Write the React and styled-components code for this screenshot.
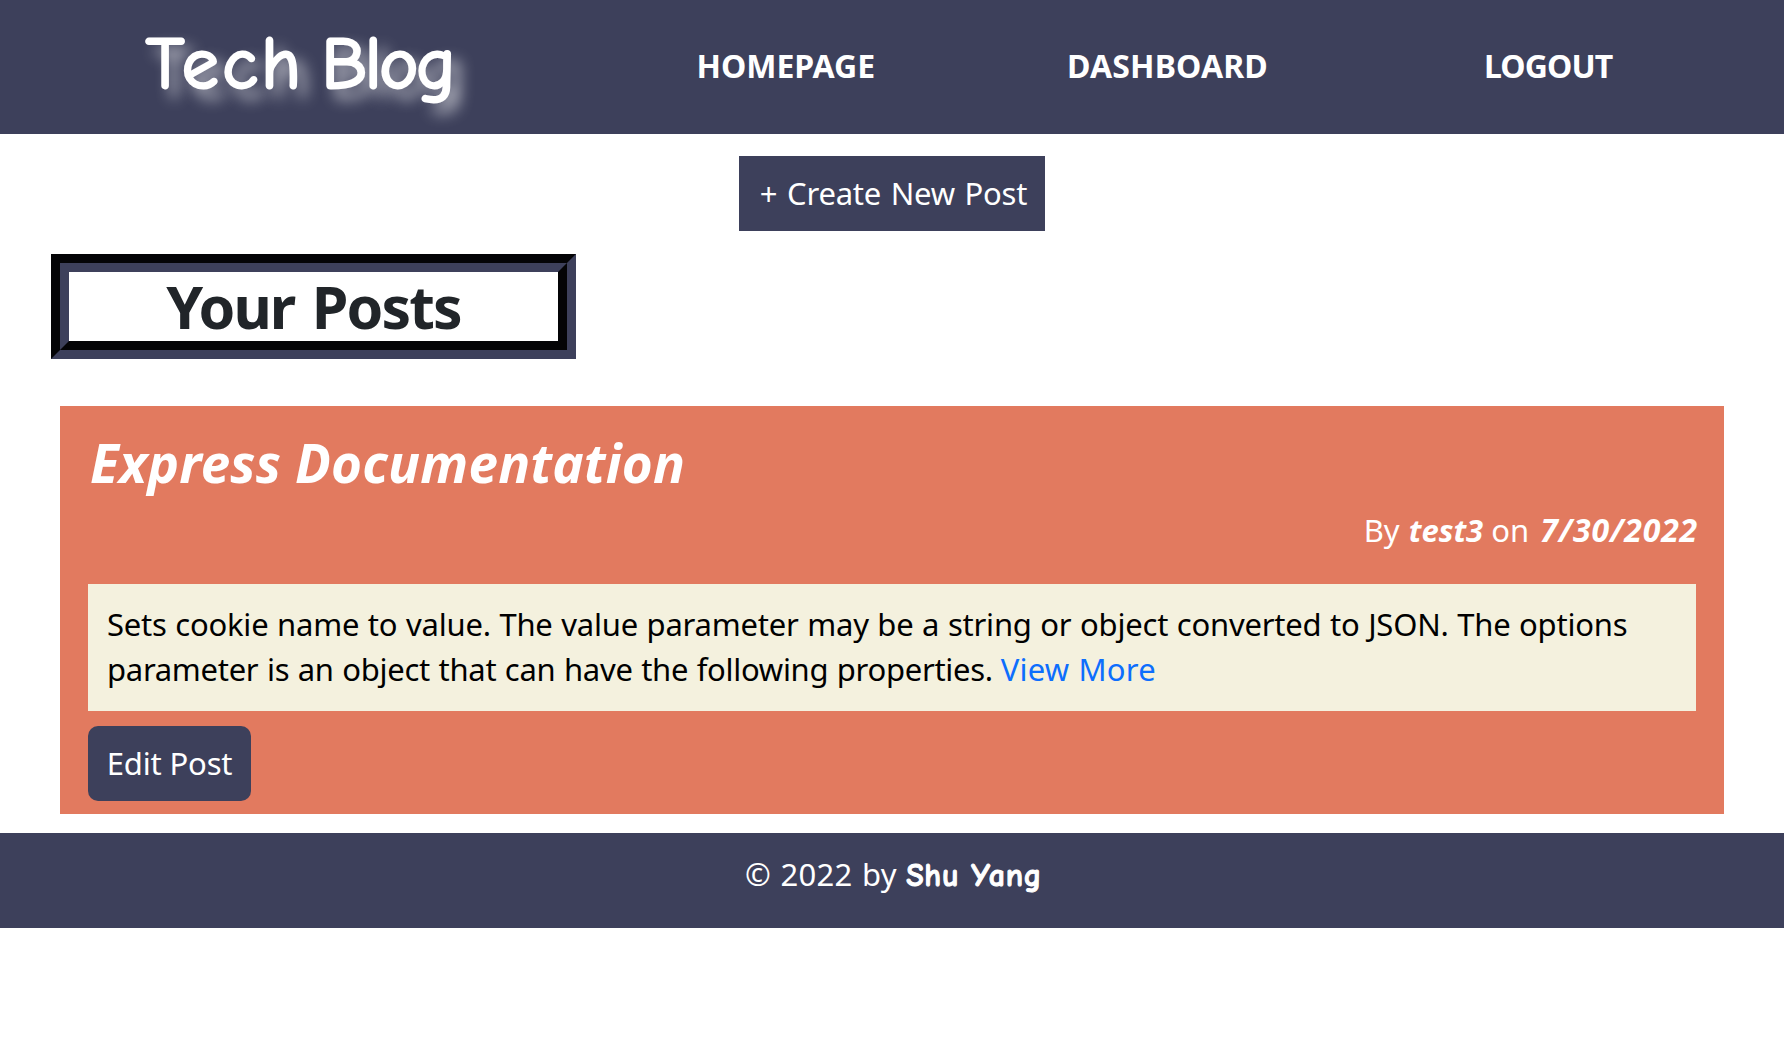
import React from "react";
import styled, { createGlobalStyle } from "styled-components";

const navy = "#3d405b";
const sans = `"Segoe UI", "Noto Sans", "Open Sans", sans-serif`;
const comic = `"Comic Sans MS", "Comic Neue", "Noto Sans", cursive`;

const GlobalStyle = createGlobalStyle`
  *, *::before, *::after { box-sizing: border-box; }
  body {
    margin: 0;
    background: #fff;
    color: #212529;
    font-family: ${sans};
    font-size: 31px;
    line-height: 45px;
  }
  h1, h2, h3, p { margin: 0; }
  a { color: inherit; text-decoration: none; }
`;

const Header = styled.header`
  display: grid;
  grid-template-columns: 595px repeat(3, 1fr);
  align-items: center;
  height: 134px;
  padding: 0 44px 3px 0;
  background: ${navy};
  color: #fff;
`;

const Brand = styled.h1`
  padding: 0 0 4px 146px;
  font: 400 73px/90px ${comic};
  word-spacing: -7px;
  white-space: nowrap;
  -webkit-text-stroke: 3px #fff;
  text-shadow: 9px 10px 15px #fff;
`;

const Tracked = styled.span`
  letter-spacing: ${(p) => p.$by}px;
`;

const NavLink = styled.a`
  justify-self: center;
  font-size: 32px;
  font-weight: 700;
  letter-spacing: ${(p) => p.$tracking || 0}px;
  margin-right: ${(p) => p.$shift || 0}px;
`;

const Actions = styled.div`
  display: flex;
  justify-content: center;
  padding: 22px 0 23px;
`;

const Button = styled.a`
  display: flex;
  align-items: center;
  justify-content: center;
  width: ${(p) => p.$width}px;
  height: 75px;
  padding-left: ${(p) => p.$indent || 0}px;
  border-radius: ${(p) => p.$radius || 0}px;
  background: ${navy};
  color: #fff;
  letter-spacing: ${(p) => p.$tracking || -0.15}px;
  word-spacing: ${(p) => p.$gap || 0}px;
  white-space: nowrap;
`;

const SectionTitle = styled.h2`
  width: 525px;
  height: 105px;
  margin-left: 51px;
  border: 18px groove ${navy};
  text-align: center;
  font-size: 59px;
  font-weight: 700;
  line-height: 69px;
  letter-spacing: -1.9px;
  word-spacing: 4px;
`;

const Card = styled.article`
  margin: 47px 60px 19px;
  height: 408px;
  padding: 25px 28px 0;
  background: #e27a5f;
  color: #fff;
`;

const CardTitle = styled.h3`
  padding-left: 2px;
  font-size: 53px;
  font-style: italic;
  font-weight: 700;
  line-height: 64px;
  letter-spacing: 0.18px;
`;

const Byline = styled.p`
  margin: 12px -2px 31px;
  text-align: right;
`;

const Strong = styled.strong`
  margin-left: ${(p) => p.$gap || 0}px;
  font-size: ${(p) => p.$size || 31}px;
  font-style: italic;
  letter-spacing: ${(p) => p.$tracking || 0}px;
`;

const Excerpt = styled.p`
  height: 127px;
  margin-bottom: 15px;
  padding: 17.5px 19px;
  background: #f4f1de;
  color: #000;
`;

const Line = styled.span`
  display: flex;
  gap: 8px;
  white-space: nowrap;
  letter-spacing: ${(p) => p.$tracking}px;
  word-spacing: ${(p) => p.$gap || 0}px;
`;

const MoreLink = styled.a`
  color: #0d6efd;
  letter-spacing: 0.2px;
`;

const Footer = styled.footer`
  height: 95px;
  padding: 19px 0 0 3px;
  background: ${navy};
  color: #fff;
  text-align: center;
  letter-spacing: 0.3px;
  word-spacing: 1px;
`;

const Author = styled.span`
  font-family: ${comic};
  font-size: 32px;
  font-weight: 700;
  letter-spacing: 0.7px;
  word-spacing: 0;
  -webkit-text-stroke: 1px #fff;
`;

export default function App() {
  return (
    <>
      <GlobalStyle />
      <Header>
        <Brand>
          <Tracked $by={3.8}>Tech</Tracked> <Tracked $by={-1.7}>Blog</Tracked>
        </Brand>
        <NavLink href="#">HOMEPAGE</NavLink>
        <NavLink href="#" $tracking={0.15}>DASHBOARD</NavLink>
        <NavLink href="#" $tracking={-0.9} $shift={2}>LOGOUT</NavLink>
      </Header>
      <main>
        <Actions>
          <Button href="#" $width={306} $indent={3} $gap={2} $tracking={-0.25}>+ Create New Post</Button>
        </Actions>
        <SectionTitle>Your Posts</SectionTitle>
        <Card>
          <CardTitle>Express Documentation</CardTitle>
          <Byline>
            By <Strong $gap={1}>test3</Strong> on <Strong $gap={3} $size={32} $tracking={0.8}>7/30/2022</Strong>
          </Byline>
          <Excerpt>
            <Line $tracking={-0.22} $gap={0.8}>
              Sets cookie name to value. The value parameter may be a string or object converted to JSON. The options
            </Line>
            <Line $tracking={-0.29} $gap={0.8}>
              <span>parameter is an object that can have the following properties.</span>
              <MoreLink href="#">View More</MoreLink>
            </Line>
          </Excerpt>
          <Button href="#" $width={163} $radius={10}>Edit Post</Button>
        </Card>
      </main>
      <Footer>
        © 2022 by <Author>Shu Yang</Author>
      </Footer>
    </>
  );
}
